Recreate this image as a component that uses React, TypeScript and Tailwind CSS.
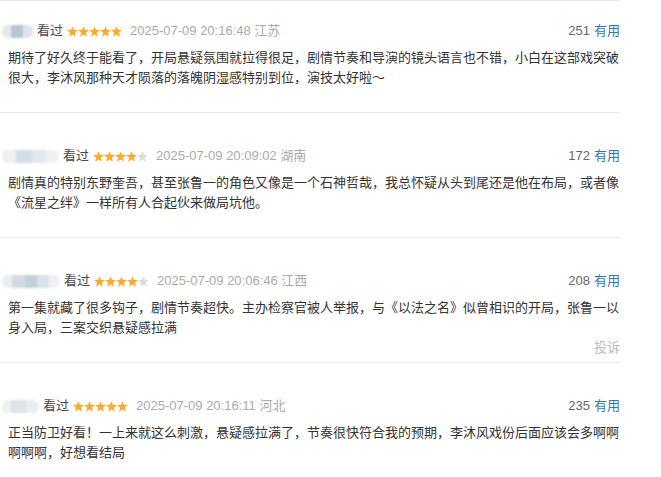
import React from 'react';

type Blob = { w: number; c: string };

type Comment = {
  avatar: Blob[];
  stars: number;
  time: string;
  region: string;
  votes: number;
  text: string;
  showReport?: boolean;
  first?: boolean;
};

const comments: Comment[] = [
  {
    avatar: [
      { w: 9, c: '#e6e9ec' },
      { w: 12, c: '#b4c6d3' },
      { w: 10, c: '#dde3e8' },
    ],
    stars: 5,
    time: '2025-07-09 20:16:48',
    region: '江苏',
    votes: 251,
    text: '期待了好久终于能看了，开局悬疑氛围就拉得很足，剧情节奏和导演的镜头语言也不错，小白在这部戏突破很大，李沐风那种天才陨落的落魄阴湿感特别到位，演技太好啦～',
    first: true,
  },
  {
    avatar: [
      { w: 14, c: '#eef0f2' },
      { w: 16, c: '#d4dde4' },
      { w: 14, c: '#e3e8ec' },
      { w: 13, c: '#eef1f3' },
    ],
    stars: 4,
    time: '2025-07-09 20:09:02',
    region: '湖南',
    votes: 172,
    text: '剧情真的特别东野奎吾，甚至张鲁一的角色又像是一个石神哲哉，我总怀疑从头到尾还是他在布局，或者像《流星之绊》一样所有人合起伙来做局坑他。',
  },
  {
    avatar: [
      { w: 10, c: '#eceef0' },
      { w: 13, c: '#d2dbe2' },
      { w: 12, c: '#c3d0da' },
      { w: 12, c: '#d9e1e7' },
      { w: 11, c: '#eef1f3' },
    ],
    stars: 4,
    time: '2025-07-09 20:06:46',
    region: '江西',
    votes: 208,
    text: '第一集就藏了很多钩子，剧情节奏超快。主办检察官被人举报，与《以法之名》似曾相识的开局，张鲁一以身入局，三案交织悬疑感拉满',
    showReport: true,
  },
  {
    avatar: [
      { w: 9, c: '#eef0f2' },
      { w: 15, c: '#dbe2e8' },
      { w: 13, c: '#e9edf0' },
    ],
    stars: 5,
    time: '2025-07-09 20:16:11',
    region: '河北',
    votes: 235,
    text: '正当防卫好看！一上来就这么刺激，悬疑感拉满了，节奏很快符合我的预期，李沐风戏份后面应该会多啊啊啊啊啊，好想看结局',
  },
];

function Star({ on }: { on: boolean }) {
  return (
    <svg width="11" height="11" viewBox="0 0 20 19" className="shrink-0">
      <polygon
        points="10,0 12.6,6.3 20,6.9 14.3,11.6 16.2,19 10,15 3.8,19 5.7,11.6 0,6.9 7.4,6.3"
        fill={on ? '#fcab2e' : '#dcdcdc'}
      />
    </svg>
  );
}

function CommentItem({ c }: { c: Comment }) {
  return (
    <div
      className={
        'border-b border-[#e8e8e8] pb-[4px] ' + (c.first ? 'pt-[20px]' : 'pt-[33px]')
      }
    >
      <div className="flex h-5 items-center pl-[2px] text-[13px] leading-5">
        <div className="flex h-[13px] overflow-hidden rounded-[6px] blur-[0.8px]">
          {c.avatar.map((b, i) => (
            <div key={i} style={{ width: b.w, backgroundColor: b.c }} />
          ))}
        </div>
        <span className="ml-[4px] text-[#494949]">看过</span>
        <div className="ml-[4px] flex">
          {[0, 1, 2, 3, 4].map((i) => (
            <Star key={i} on={i < c.stars} />
          ))}
        </div>
        <span className="ml-[8px] text-[#aaa]">
          {c.time} {c.region}
        </span>
        <span className="ml-auto text-[#666]">{c.votes}</span>
        <span className="ml-[4px] text-[#37a]">有用</span>
      </div>
      <p className="mt-[7px] pl-2 text-[13px] leading-5 text-[#333]">{c.text}</p>
      <div className="h-5 text-right text-[13px] leading-5 text-[#bbb]">
        {c.showReport ? '投诉' : ''}
      </div>
    </div>
  );
}

export default function App() {
  return (
    <div
      className="h-[477px] w-[661px] overflow-hidden bg-white"
      style={{ fontFamily: '"Liberation Sans", "Noto Sans CJK SC", sans-serif' }}
    >
      <div className="w-[620px] border-t border-[#e8e8e8]">
        {comments.map((c, i) => (
          <CommentItem key={i} c={c} />
        ))}
      </div>
    </div>
  );
}
